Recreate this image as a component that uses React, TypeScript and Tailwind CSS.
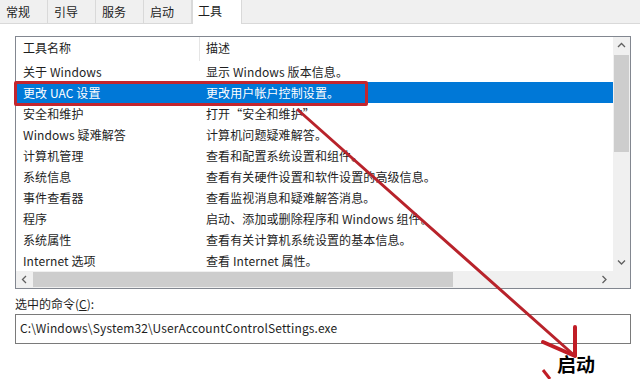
import React from "react";

const tabs = ["常规", "引导", "服务", "启动", "工具"];

const rows: Array<[string, string]> = [
  ["关于 Windows", "显示 Windows 版本信息。"],
  ["更改 UAC 设置", "更改用户帐户控制设置。"],
  ["安全和维护", "打开“安全和维护”"],
  ["Windows 疑难解答", "计算机问题疑难解答。"],
  ["计算机管理", "查看和配置系统设置和组件。"],
  ["系统信息", "查看有关硬件设置和软件设置的高级信息。"],
  ["事件查看器", "查看监视消息和疑难解答消息。"],
  ["程序", "启动、添加或删除程序和 Windows 组件。"],
  ["系统属性", "查看有关计算机系统设置的基本信息。"],
  ["Internet 选项", "查看 Internet 属性。"],
];

function Chevron({ dir }: { dir: "up" | "down" | "left" | "right" }) {
  const d = {
    up: "M1 5 L4.5 1.5 L8 5",
    down: "M1 1.5 L4.5 5 L8 1.5",
    left: "M5 1 L1.5 4.5 L5 8",
    right: "M1.5 1 L5 4.5 L1.5 8",
  }[dir];
  const vertical = dir === "up" || dir === "down";
  return (
    <svg width={vertical ? 9 : 7} height={vertical ? 7 : 9} viewBox={vertical ? "0 0 9 7" : "0 0 7 9"}>
      <path d={d} fill="none" stroke="#606060" strokeWidth="1.3" />
    </svg>
  );
}

export default function App() {
  return (
    <div className="relative h-[379px] w-[640px] overflow-hidden bg-white text-[12px] text-[#1e1e1e] [font-family:'Noto_Sans_CJK_SC','Noto_Sans',sans-serif]">
      {/* tab strip */}
      <div className="flex h-[24px] border-b border-[#d9d9d9] bg-[#f0f0f0]">
        {tabs.map((t) =>
          t === "工具" ? (
            <div key={t} className="-mb-px h-[24px] w-[50px] border-x border-[#d9d9d9] bg-white pl-[5px] pt-[3px] leading-[16px]">
              {t}
            </div>
          ) : (
            <div key={t} className="w-[48px] border-r border-[#d9d9d9] pl-[6px] pt-[4px] leading-[16px]">
              {t}
            </div>
          )
        )}
      </div>

      <div className="pl-[15px] pr-[9px] pt-[12px]">
        {/* list */}
        <div className="flex h-[253px] border border-[#828790]">
          <div className="flex min-w-0 flex-1 flex-col">
            <div className="flex h-[24px] shrink-0">
              <div className="w-[184px] border-r border-[#e5e5e5] pl-[7px] leading-[22px]">工具名称</div>
              <div className="pl-[6px] leading-[22px]">描述</div>
            </div>
            {rows.map(([name, desc], i) => (
              <div
                key={name}
                className={
                  i === 1
                    ? "flex h-[21px] shrink-0 items-center bg-[#0078d7] text-white"
                    : "flex h-[21px] shrink-0 items-center"
                }
              >
                <div className="w-[184px] whitespace-nowrap pl-[7px] tracking-[0.1px]">{name}</div>
                <div className="whitespace-nowrap pl-[6px] tracking-[0.1px]">{desc}</div>
              </div>
            ))}
            <div className="flex h-[17px] shrink-0 items-center bg-[#f0f0f0]">
              <div className="flex h-[17px] w-[17px] items-center justify-center">
                <Chevron dir="left" />
              </div>
              <div className="h-[15px] w-[420px] bg-[#cdcdcd]" />
              <div className="flex-1" />
              <div className="flex h-[17px] w-[17px] items-center justify-center">
                <Chevron dir="right" />
              </div>
            </div>
          </div>
          <div className="flex w-[17px] flex-col bg-[#f0f0f0]">
            <div className="flex h-[17px] items-center justify-center">
              <Chevron dir="up" />
            </div>
            <div className="mx-px mt-px h-[97px] bg-[#cdcdcd]" />
            <div className="flex-1" />
            <div className="flex h-[17px] items-center justify-center">
              <Chevron dir="down" />
            </div>
            <div className="h-[17px] bg-[#f0f0f0]" />
          </div>
        </div>

        {/* selected command */}
        <div className="mb-[2px] pt-[7px] leading-[16px]">
          选中的命令(<span className="underline">C</span>):
        </div>
        <div className="h-[30px] border border-[#7a7a7a] pl-[4px] leading-[26px] tracking-[0.15px]">
          C:\Windows\System32\UserAccountControlSettings.exe
        </div>
      </div>

      {/* annotation: red box */}
      <div className="absolute left-[14px] top-[81px] h-[25px] w-[354px] rounded-[2px] border-[3px] border-[#c3262e]" />

      {/* annotation: arrow */}
      <svg className="pointer-events-none absolute left-0 top-0" width="640" height="379" viewBox="0 0 640 379">
        <path d="M298 110 L575 356" stroke="#b8232b" strokeWidth="3" strokeLinecap="round" fill="none" />
        <path d="M575 327 L575 356 L543 342" stroke="#c01d26" strokeWidth="4" strokeLinecap="round" strokeLinejoin="round" fill="none" />
        <path d="M543 370 L550 379" stroke="#c01d26" strokeWidth="3" fill="none" />
      </svg>

      <div className="absolute left-[557px] top-[352px] text-[19px] font-bold leading-[24px] text-black">启动</div>
    </div>
  );
}
